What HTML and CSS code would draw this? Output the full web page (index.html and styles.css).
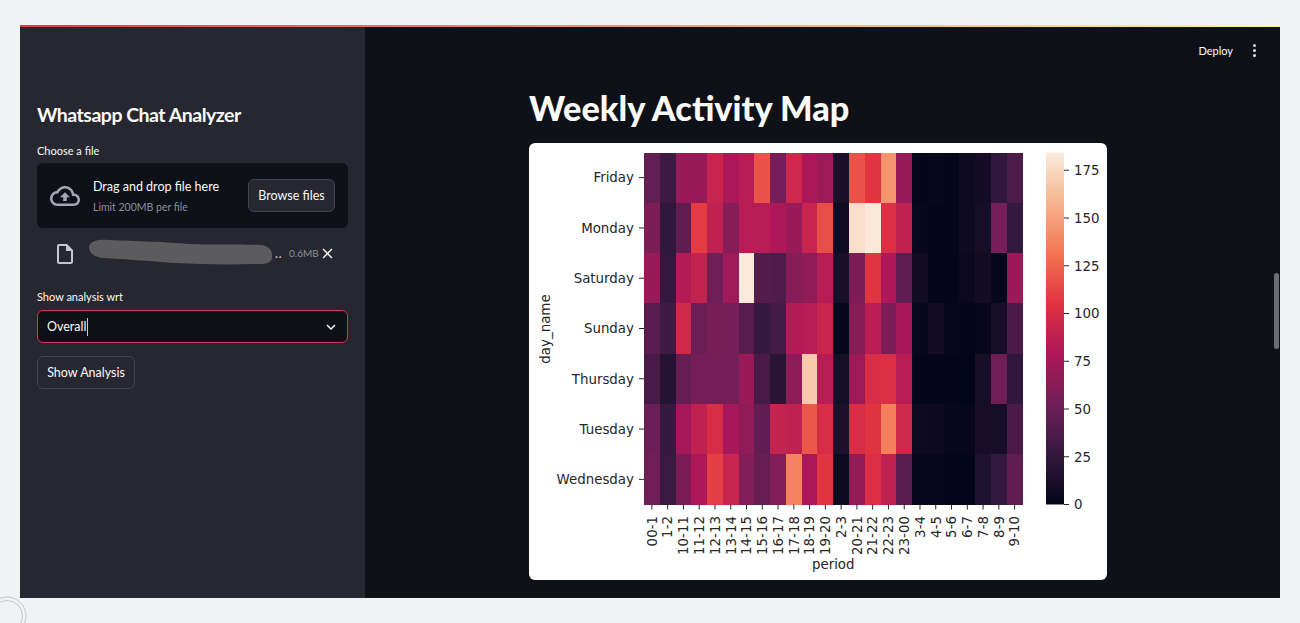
FILE: index.html
```html
<!DOCTYPE html>
<html lang="en">
<head>
    <meta charset="UTF-8">
    <meta name="viewport" content="width=device-width, initial-scale=1.0">
    <title>Whatsapp Chat Analyzer</title>
    <link rel="stylesheet" href="styles.css">
</head>
<body>
    <div class="app">
        <div class="top-line"></div>
        <div class="app-body">
            <aside class="sidebar">
                <h2 class="side-title">Whatsapp Chat Analyzer</h2>

                <label class="field-label">Choose a file</label>
                <div class="dropzone">
                    <svg class="cloud-icon" viewBox="0 0 24 24"><path d="M19.35 10.04C18.67 6.59 15.64 4 12 4 9.11 4 6.6 5.64 5.35 8.04 2.34 8.36 0 10.91 0 14c0 3.31 2.69 6 6 6h13c2.76 0 5-2.24 5-5 0-2.64-2.05-4.78-4.65-4.96zM19 18H6c-2.21 0-4-1.79-4-4 0-2.05 1.53-3.76 3.56-3.97l1.07-.11.5-.95C8.08 7.14 9.94 6 12 6c2.62 0 4.88 1.86 5.39 4.43l.3 1.5 1.53.11c1.56.1 2.78 1.41 2.78 2.96 0 1.65-1.35 3-3 3zM8 13h2.55v3h2.9v-3H16l-4-4z"/></svg>
                    <div class="drop-text">
                        <div class="drop-main">Drag and drop file here</div>
                        <div class="drop-limit">Limit 200MB per file</div>
                    </div>
                    <button class="btn browse-btn">Browse files</button>
                </div>

                <div class="file-row">
                    <svg class="file-icon" viewBox="0 0 24 24"><path d="M14 2H6c-1.1 0-1.99.9-1.99 2L4 20c0 1.1.89 2 1.99 2H18c1.1 0 2-.9 2-2V8l-6-6zM6 20V4h7v5h5v11H6z"/></svg>
                    <svg class="scribble" viewBox="0 0 184 26"><path d="M0 8C1 2 8 0 20 1C50 2 75 3 100 5C125 6 150 5 172 6C181 7 184 13 183 19C182 25 176 25 165 25C135 26 110 25 85 24C60 22 35 20 14 19C5 18 0 14 0 8Z"/></svg>
                    <span class="file-dots">..</span>
                    <span class="file-size">0.6MB</span>
                    <svg class="close-icon" viewBox="0 0 24 24"><path d="M19 6.41L17.59 5 12 10.59 6.41 5 5 6.41 10.59 12 5 17.59 6.41 19 12 13.41 17.59 19 19 17.59 13.41 12z"/></svg>
                </div>

                <label class="field-label analysis-label">Show analysis wrt</label>
                <div class="select-box">
                    <span class="select-value">Overall</span><span class="caret"></span>
                    <svg class="chevron" viewBox="0 0 24 24"><path d="M16.59 8.59L12 13.17 7.41 8.59 6 10l6 6 6-6z"/></svg>
                </div>

                <button class="btn show-btn">Show Analysis</button>
            </aside>

            <main class="main">
                <header class="toolbar">
                    <span class="deploy">Deploy</span>
                    <span class="menu-dots"><i></i><i></i><i></i></span>
                </header>
                <section class="content">
                    <h1 class="page-title">Weekly Activity Map</h1>
                    <div class="chart-card">
                        <svg id="heatmap" class="heatmap" viewBox="0 0 578 437"></svg>
                    </div>
                </section>
                <div class="scroll-thumb"></div>
            </main>
        </div>
    </div>

    <svg class="spinner" viewBox="0 0 40 40">
        <circle cx="20" cy="20" r="19"/>
        <circle cx="20" cy="20" r="15.5"/>
    </svg>

    <script src="app.js"></script>
</body>
</html>
```

FILE: styles.css
```css
* {
    box-sizing: border-box;
}
html, body {
    height: 100%;
}
body {
    margin: 0;
    padding: 25px 20px;
    background-color: #f0f2f6;
    font-family: "Lato", "Noto Sans", sans-serif;
    overflow: hidden;
}
.app {
    height: 573px;
    display: flex;
    flex-direction: column;
    background: #0e1117;
}
.top-line {
    height: 2px;
    flex-shrink: 0;
    background: linear-gradient(90deg, #e8383c, #fffd80);
}
.app-body {
    flex: 1;
    display: flex;
    min-height: 0;
}

/* sidebar */
.sidebar {
    width: 345px;
    flex-shrink: 0;
    padding: 75px 17px 0;
    background: #262730;
    color: #fafafa;
}
.side-title {
    margin: 0 0 15px;
    font-size: 19.5px;
    line-height: 26px;
    font-weight: 700;
    letter-spacing: -0.5px;
}
.field-label {
    display: block;
    font-size: 11px;
    line-height: 15px;
    margin-bottom: 5px;
}
.dropzone {
    height: 65px;
    display: flex;
    align-items: center;
    padding: 0 13px;
    border-radius: 6px;
    background: #0e1117;
}
.cloud-icon {
    width: 30px;
    height: 30px;
    fill: #a3a8b4;
    flex-shrink: 0;
}
.drop-text {
    margin-left: 13px;
    flex: 1;
}
.drop-main {
    font-size: 12.5px;
    line-height: 18px;
}
.drop-limit {
    margin-top: 4px;
    font-size: 10.5px;
    line-height: 14px;
    color: #8b8f99;
}
.btn {
    font-family: inherit;
    color: #fafafa;
    background: #262730;
    border: 1px solid #43444e;
    border-radius: 6px;
    font-size: 12.5px;
}
.browse-btn {
    width: 87px;
    height: 33px;
    padding: 0;
}
.file-row {
    height: 26px;
    margin-top: 12px;
    display: flex;
    align-items: center;
}
.file-icon {
    width: 24px;
    height: 24px;
    margin-left: 16px;
    margin-top: 2px;
    fill: #c4c7ce;
    flex-shrink: 0;
}
.scribble {
    width: 184px;
    height: 26px;
    margin-left: 12px;
    margin-top: -3px;
    fill: #5c5c5e;
    flex-shrink: 0;
}
.file-dots {
    margin-left: 2px;
    width: 14px;
    font-size: 12px;
    font-weight: 700;
    letter-spacing: 1px;
    color: #c4c7ce;
}
.file-size {
    font-size: 10px;
    color: #8b8f99;
}
.close-icon {
    width: 17px;
    height: 17px;
    margin-left: 0;
    fill: #fafafa;
}
.analysis-label {
    margin-top: 23px;
    margin-bottom: 6px;
}
.select-box {
    height: 33px;
    display: flex;
    align-items: center;
    padding: 0 9px;
    border: 1px solid #d23a41;
    border-radius: 6px;
    background: #0e1117;
    font-size: 12.5px;
}
.caret {
    width: 1px;
    height: 18px;
    margin-left: 1px;
    background: #c9cacc;
}
.chevron {
    width: 18px;
    height: 18px;
    margin-left: auto;
    margin-right: -2px;
    fill: #fafafa;
}
.show-btn {
    display: block;
    width: 98px;
    height: 33px;
    margin-top: 13px;
    padding: 0;
}

/* main area */
.main {
    flex: 1;
    position: relative;
    overflow: hidden;
    color: #fafafa;
}
.toolbar {
    height: 46px;
    display: flex;
    justify-content: flex-end;
    align-items: center;
    padding-right: 24px;
}
.deploy {
    font-size: 11px;
    margin-right: 20px;
}
.menu-dots {
    display: flex;
    flex-direction: column;
    gap: 2px;
}
.menu-dots i {
    width: 3px;
    height: 3px;
    border-radius: 50%;
    background: #e6e6e8;
}
.content {
    padding-left: 164px;
}
.page-title {
    margin: 12px 0 12px;
    font-size: 34.3px;
    line-height: 46px;
    font-weight: 900;
}
.chart-card {
    width: 578px;
    height: 437px;
    overflow: hidden;
    border-radius: 6px;
    background: #fff;
}
.heatmap {
    display: block;
    width: 578px;
    height: 437px;
    font-family: "DejaVu Sans", sans-serif;
    font-size: 13.4px;
    fill: #262626;
}
.heatmap .cell {
    shape-rendering: crispEdges;
}
.heatmap .tick {
    stroke: #262626;
    stroke-width: 1;
}
.scroll-thumb {
    position: absolute;
    top: 246px;
    right: 1px;
    width: 5px;
    height: 76px;
    border-radius: 3px;
    background: #6b6c71;
}

/* faint loader circle in the page corner */
.spinner {
    position: absolute;
    left: -13px;
    top: 596px;
    width: 40px;
    height: 40px;
    fill: none;
    stroke: #c3c5c9;
    stroke-width: 1;
}
```

FILE: app.js
```js
const rocket = ['#03051a', '#35193e', '#701f57', '#ad1759', '#e13342', '#f37651', '#f6b48f', '#faebdd'];
const maxValue = 184.3;

const days = ['Friday', 'Monday', 'Saturday', 'Sunday', 'Thursday', 'Tuesday', 'Wednesday'];
const periods = ['00-1', '1-2', '10-11', '11-12', '12-13', '13-14', '14-15', '15-16', '16-17', '17-18', '18-19', '19-20',
    '2-3', '20-21', '21-22', '22-23', '23-00', '3-4', '4-5', '5-6', '6-7', '7-8', '8-9', '9-10'];

const values = [
    [47, 30, 70, 70, 92, 78, 84, 118, 55, 95, 78, 72, 13, 118, 106, 145, 70, 1, 3, 1, 6, 9, 24, 37],
    [58, 24, 45, 108, 88, 62, 84, 84, 80, 70, 92, 116, 8, 178, 183, 102, 88, 3, 1, 1, 6, 10, 55, 26],
    [70, 25, 82, 90, 52, 72, 184, 40, 38, 62, 66, 84, 12, 58, 106, 80, 46, 8, 1, 1, 4, 9, 2, 70],
    [42, 30, 96, 50, 56, 55, 42, 27, 33, 82, 84, 92, 2, 62, 85, 58, 76, 2, 9, 2, 1, 3, 10, 36],
    [35, 18, 48, 55, 55, 55, 70, 35, 20, 65, 168, 84, 10, 72, 100, 102, 84, 1, 1, 1, 0, 10, 52, 24],
    [50, 27, 75, 88, 100, 76, 66, 46, 90, 88, 120, 100, 14, 100, 105, 136, 96, 6, 5, 3, 3, 11, 11, 36],
    [52, 28, 58, 80, 110, 92, 60, 48, 60, 137, 78, 106, 6, 68, 102, 88, 42, 3, 3, 1, 1, 16, 26, 46]
];

function hexToRgb(hex) {
    return [1, 3, 5].map(i => parseInt(hex.slice(i, i + 2), 16));
}

function colorFor(value) {
    const t = Math.min(value / maxValue, 1) * (rocket.length - 1);
    const i = Math.min(Math.floor(t), rocket.length - 2);
    const a = hexToRgb(rocket[i]);
    const b = hexToRgb(rocket[i + 1]);
    const rgb = a.map((c, k) => Math.round(c + (b[k] - c) * (t - i)));
    return `rgb(${rgb.join(',')})`;
}

const svg = document.getElementById('heatmap');

function add(tag, attrs, text) {
    const el = document.createElementNS('http://www.w3.org/2000/svg', tag);
    for (const key in attrs) {
        el.setAttribute(key, attrs[key]);
    }
    if (text) el.textContent = text;
    svg.appendChild(el);
    return el;
}

// heatmap area, in card coordinates
const left = 115, top0 = 9.5, plotW = 378.5, plotH = 352;
const cellW = plotW / periods.length, cellH = plotH / days.length;

values.forEach((row, r) => {
    row.forEach((v, c) => {
        add('rect', {
            class: 'cell',
            x: left + c * cellW, y: top0 + r * cellH,
            width: cellW, height: cellH,
            fill: colorFor(v)
        });
    });
});

days.forEach((day, r) => {
    const y = top0 + (r + 0.5) * cellH;
    add('line', { class: 'tick', x1: left - 5, x2: left, y1: y, y2: y });
    add('text', { x: left - 10, y: y + 4.8, 'text-anchor': 'end' }, day);
});

periods.forEach((p, c) => {
    const x = left + (c + 0.5) * cellW;
    const y = top0 + plotH;
    add('line', { class: 'tick', x1: x, x2: x, y1: y, y2: y + 5 });
    add('text', { transform: `translate(${x + 4.8} ${y + 11.5}) rotate(-90)`, 'text-anchor': 'end' }, p);
});

add('text', { x: left + plotW / 2, y: 425.5, 'text-anchor': 'middle' }, 'period');
add('text', { transform: 'translate(21 186) rotate(-90)', 'text-anchor': 'middle' }, 'day_name');

// colour bar
const defs = add('defs', {});
const grad = document.createElementNS('http://www.w3.org/2000/svg', 'linearGradient');
grad.setAttribute('id', 'barGrad');
grad.setAttribute('x1', '0');
grad.setAttribute('y1', '1');
grad.setAttribute('x2', '0');
grad.setAttribute('y2', '0');
rocket.forEach((color, i) => {
    const stop = document.createElementNS('http://www.w3.org/2000/svg', 'stop');
    stop.setAttribute('offset', i / (rocket.length - 1));
    stop.setAttribute('stop-color', color);
    grad.appendChild(stop);
});
defs.appendChild(grad);

const barX = 517, barW = 18;
add('rect', { x: barX, y: top0, width: barW, height: plotH, fill: 'url(#barGrad)' });

[0, 25, 50, 75, 100, 125, 150, 175].forEach(v => {
    const y = top0 + plotH - v / maxValue * plotH;
    add('line', { class: 'tick', x1: barX + barW, x2: barX + barW + 5, y1: y, y2: y });
    add('text', { x: barX + barW + 10, y: y + 4.8 }, String(v));
});
```
